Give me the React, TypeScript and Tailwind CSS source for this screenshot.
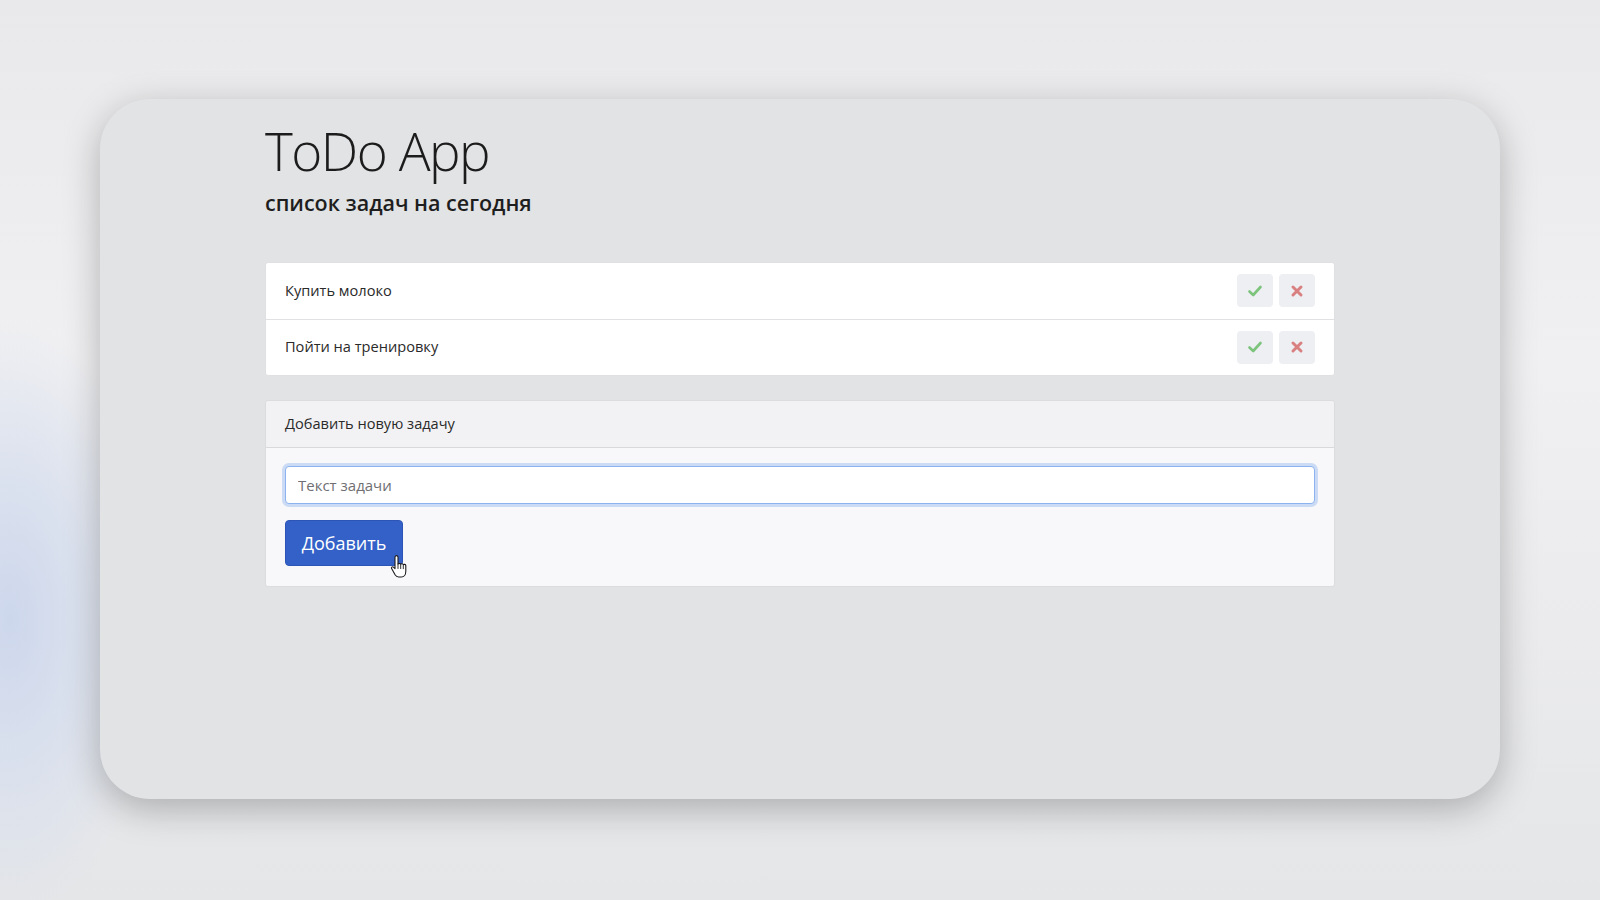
import React from 'react';

const tasks = ['Купить молоко', 'Пойти на тренировку'];

function Check() {
  return (
    <svg width="16" height="16" viewBox="0 0 16 16">
      <path d="M2.5 8.5 L6.2 12 L13.5 4" fill="none" stroke="#7cc47c" strokeWidth="2.6" strokeLinecap="round" strokeLinejoin="round" />
    </svg>
  );
}

function Cross() {
  return (
    <svg width="14" height="14" viewBox="0 0 14 14">
      <path d="M3 3 L11 11 M11 3 L3 11" fill="none" stroke="#d98080" strokeWidth="3" strokeLinecap="round" />
    </svg>
  );
}

function HandCursor() {
  return (
    <svg width="18" height="24" viewBox="0 0 18 24" className="absolute left-[105px] top-[35px]">
      <path
        d="M5 2.2c0-.9.7-1.6 1.5-1.6S8 1.3 8 2.2V9c.3-.6 2.4-.8 2.7.3.4-.7 2.3-.8 2.6.4.5-.6 2.4-.5 2.5.9v5.6c0 2.8-1.5 5.8-4.4 5.8H8.5c-1.6 0-2.6-.9-3.4-2.2L1.6 13.5c-.6-1 .7-2.3 1.8-1.4L5 13.6z"
        fill="#fff"
        stroke="#1a1a1a"
        strokeWidth="1.1"
        strokeLinejoin="round"
      />
      <path d="M8 9v4.5M10.7 9.6v4M13.3 10.3v3.4" stroke="#1a1a1a" strokeWidth="0.9" strokeLinecap="round" />
    </svg>
  );
}

export default function App() {
  return (
    <div
      className="w-[1600px] h-[900px] overflow-hidden flex items-start justify-center pt-[99px] bg-[#ededef]"
      style={{
        backgroundImage:
          'radial-gradient(ellipse 150px 300px at 10px 620px, #cdd7ec 0%, rgba(212,221,238,0.75) 45%, rgba(237,237,239,0) 100%), linear-gradient(180deg, #e9e9eb 0%, #f0f0f2 40%, #e5e6e8 100%)',
      }}
    >
      <div
        className="w-[1400px] h-[700px] rounded-[50px] bg-[#e2e3e5] shadow-[0_10px_36px_rgba(0,0,0,0.26)] flex justify-center"
        style={{ fontFamily: '"Open Sans", "Noto Sans", sans-serif' }}
      >
        <div className="w-[1070px] pt-[22px]">
          <h1 className="text-[53px] font-light leading-[1.15] text-[#1c1c1c] tracking-[-1.5px]">ToDo App</h1>
          <h2 className="mt-[8px] text-[21.5px] font-semibold text-[#1e1e1e] leading-[1.2]">список задач на сегодня</h2>

          <ul className="mt-[46px] bg-white rounded-[3px] border border-[#e0e0e2]">
            {tasks.map((t, i) => (
              <li
                key={t}
                className={`h-[56px] flex items-center justify-between pl-[19px] pr-[19px] ${i > 0 ? 'border-t border-[#e1e1e3]' : ''}`}
              >
                <span className="text-[14.6px] text-[#2a2a2a]">{t}</span>
                <div className="flex gap-[6px]">
                  <button className="w-[36px] h-[33px] rounded-[4px] bg-[#eeeff3] flex items-center justify-center">
                    <Check />
                  </button>
                  <button className="w-[36px] h-[33px] rounded-[4px] bg-[#eeeff3] flex items-center justify-center">
                    <Cross />
                  </button>
                </div>
              </li>
            ))}
          </ul>

          <div className="mt-[24px] rounded-[3px] border border-[#dcdcde] overflow-hidden">
            <div className="h-[47px] flex items-center px-[19px] bg-[#f2f2f4] border-b border-[#d9d9db]">
              <span className="text-[14.6px] text-[#2a2a2a]">Добавить новую задачу</span>
            </div>
            <div className="bg-[#f8f8fa] px-[19px] pt-[18px] pb-[20px]">
              <input
                placeholder="Текст задачи"
                className="w-full h-[38px] rounded-[4px] bg-white border border-[#8db3ee] shadow-[0_0_0_3px_rgba(150,185,240,0.45)] px-[12px] text-[15px] text-[#333] placeholder:text-[#6f6f73] outline-none"
              />
              <div className="relative mt-[16px] w-fit">
                <button className="h-[46px] w-[118px] rounded-[4px] bg-[#3361c8] border border-[#2c55b5] text-white text-[18px] leading-none">
                  Добавить
                </button>
                <HandCursor />
              </div>
            </div>
          </div>
        </div>
      </div>
    </div>
  );
}
